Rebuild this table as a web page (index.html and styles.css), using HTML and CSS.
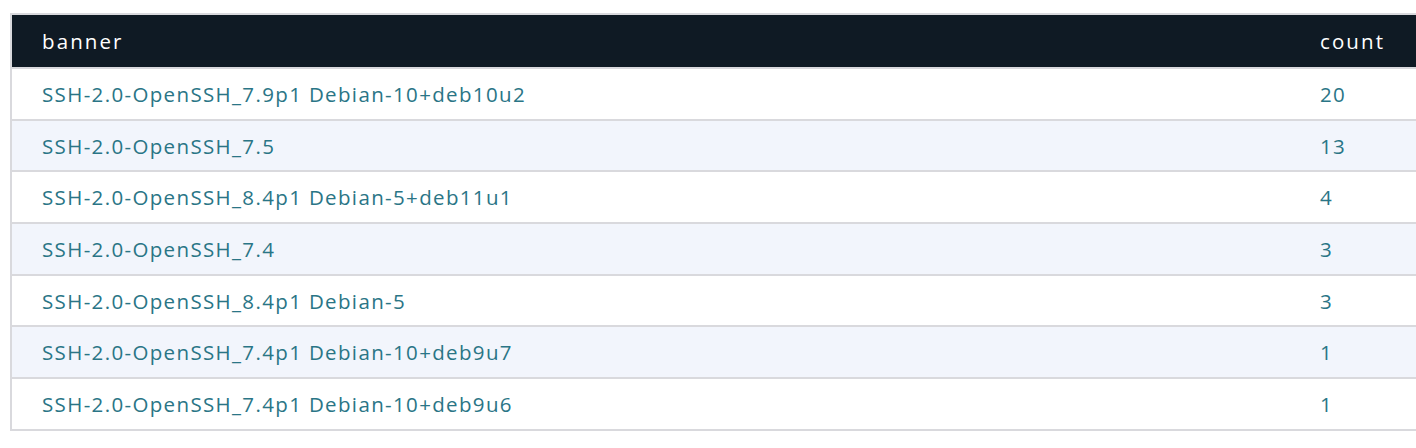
FILE: index.html
```html
<!DOCTYPE html>
<html>
<head>
<meta charset="utf-8">
<link rel="stylesheet" href="styles.css">
</head>
<body>
<div class="wrap">
<table class="tbl">
  <colgroup><col class="col-banner"><col class="col-count"></colgroup>
  <thead>
    <tr><th>banner</th><th>count</th></tr>
  </thead>
  <tbody>
    <tr><td>SSH-2.0-OpenSSH_7.9p1 Debian-10+deb10u2</td><td>20</td></tr>
    <tr><td>SSH-2.0-OpenSSH_7.5</td><td>13</td></tr>
    <tr><td>SSH-2.0-OpenSSH_8.4p1 Debian-5+deb11u1</td><td>4</td></tr>
    <tr><td>SSH-2.0-OpenSSH_7.4</td><td>3</td></tr>
    <tr><td>SSH-2.0-OpenSSH_8.4p1 Debian-5</td><td>3</td></tr>
    <tr><td>SSH-2.0-OpenSSH_7.4p1 Debian-10+deb9u7</td><td>1</td></tr>
    <tr><td>SSH-2.0-OpenSSH_7.4p1 Debian-10+deb9u6</td><td>1</td></tr>
  </tbody>
</table>
</div>
</body>
</html>
```
FILE: styles.css
```css
html, body {
  margin: 0;
  padding: 0;
  overflow: hidden;
  background: #ffffff;
}
.wrap {
  padding: 13px 0 0 10px;
}
.tbl {
  width: 1440px;
  table-layout: fixed;
  border-collapse: collapse;
  border: 2px solid #d9d9dd;
  font-family: "Open Sans", "Liberation Sans", sans-serif;
  font-size: 20.5px;
}
.col-banner {
  width: 1279px;
}
.tbl th {
  background: #0f1a24;
  color: #ffffff;
  font-weight: 400;
  text-align: left;
  height: 52px;
  padding: 0 0 0 30px;
  letter-spacing: 2.1px;
}
.tbl td {
  color: #2a7586;
  height: 49.7px;
  padding: 0 0 0 30px;
  border-top: 2px solid #d9d9dd;
  letter-spacing: 1.35px;
}
.tbl tbody tr:nth-child(even) td {
  background: #f2f5fc;
}
```
